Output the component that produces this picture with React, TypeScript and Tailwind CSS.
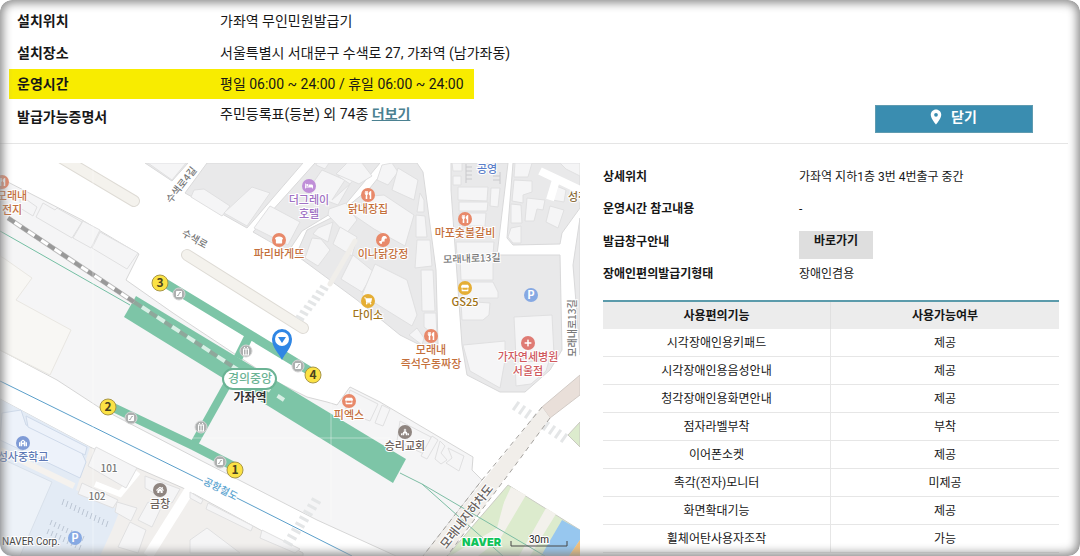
import type { ComponentType, ReactNode } from "react";
import {
  FaBed,
  FaBreadSlice,
  FaChurch,
  FaDrumstickBite,
  FaHome,
  FaPlus,
  FaSchool,
  FaShoppingCart,
  FaStore,
  FaUtensils,
} from "react-icons/fa";
import { MdEscalator, MdLocationOn } from "react-icons/md";

type IconType = ComponentType<{ x?: number; y?: number; size?: number; color?: string }>;

const features: [string, string][] = [
  ["시각장애인용키패드", "제공"],
  ["시각장애인용음성안내", "제공"],
  ["청각장애인용화면안내", "제공"],
  ["점자라벨부착", "부착"],
  ["이어폰소켓", "제공"],
  ["촉각(전자)모니터", "미제공"],
  ["화면확대기능", "제공"],
  ["휠체어탄사용자조작", "가능"],
];

const ORANGE = "#c4703c";
const BROWN = "#8a6d3b";

const places: { x: number; y: number; icon: IconType; fill: string; color: string; lines: string[] }[] = [
  { x: 309, y: 186, icon: FaBed, fill: "#c08fd8", color: "#a071c4", lines: ["더그레이", "호텔"] },
  { x: 368, y: 195, icon: FaUtensils, fill: "#e8896a", color: ORANGE, lines: ["닭내장집"] },
  { x: 279, y: 240, icon: FaBreadSlice, fill: "#e8896a", color: ORANGE, lines: ["파리바게뜨"] },
  { x: 383, y: 240, icon: FaDrumstickBite, fill: "#e8896a", color: ORANGE, lines: ["이나닭강정"] },
  { x: 465, y: 219, icon: FaUtensils, fill: "#e8896a", color: ORANGE, lines: ["마포숯불갈비"] },
  { x: 368, y: 301, icon: FaShoppingCart, fill: "#e5ae35", color: "#a07215", lines: ["다이소"] },
  { x: 465, y: 288, icon: FaStore, fill: "#e5ae35", color: "#a07215", lines: ["GS25"] },
  { x: 431, y: 336, icon: FaUtensils, fill: "#e8896a", color: ORANGE, lines: ["모래내", "즉석우동짜장"] },
  { x: 528, y: 343, icon: FaPlus, fill: "#df7b74", color: "#cf5a5e", lines: ["가자연세병원", "서울점"] },
  { x: 349, y: 401, icon: FaStore, fill: "#e8896a", color: ORANGE, lines: ["피엑스"] },
  { x: 405, y: 432, icon: FaChurch, fill: "#8f8580", color: "#6d625c", lines: ["승리교회"] },
  { x: 160, y: 490, icon: FaHome, fill: "#8f8580", color: "#6d625c", lines: ["금창"] },
  { x: 23, y: 443, icon: FaSchool, fill: "#7f9bd6", color: "#5d78b5", lines: ["성사중학교"] },
  { x: 2, y: 182, icon: FaUtensils, fill: "#e8896a", color: ORANGE, lines: ["모래내", "전지"] },
];

const exits = [
  { n: 1, x: 235, y: 470 },
  { n: 2, x: 108, y: 407 },
  { n: 3, x: 160, y: 283 },
  { n: 4, x: 313, y: 375 },
];

function Lift({ x = 0, y = 0, color }: { x?: number; y?: number; color?: string }) {
  return (
    <g transform={`translate(${x} ${y})`} fill="none" stroke={color}>
      <rect x="1.5" y="2" width="5" height="6" />
      <path d="M4 2v6M2 .5h1M5 .5h1" />
    </g>
  );
}

const facilities: { x: number; y: number; icon: IconType }[] = [
  { x: 179, y: 294, icon: MdEscalator },
  { x: 246, y: 351, icon: Lift },
  { x: 298, y: 366, icon: MdEscalator },
  { x: 131, y: 418, icon: MdEscalator },
  { x: 201, y: 427, icon: Lift },
  { x: 220, y: 462, icon: MdEscalator },
];

const buildings = [
  "43,203 55,210 57,208 82,222 72,238 36,217",
  "83,221 100,230 91,248 73,238",
  "100,232 138,253 127,269 92,248",
  "20,195 37,207 33,216 20,208",
  "194,190 204,189 230,206 222,216 191,197",
  "225,212 252,187 270,193 247,226 224,213",
  "148,163 186,163 172,180",
  "270,206 300,222 288,245 254,228",
  "308,190 322,170 345,180 332,200 350,184 338,205 314,196",
  "348,163 360,172 350,184 338,176",
  "347,163 362,163 372,176 359,184 336,174",
  "317,163 329,163 325,169 316,165",
  "329,209 346,203 357,220 346,234 328,215",
  "318,228 333,222 328,242 313,234",
  "312,238 321,239 330,250 318,266 305,258",
  "340,227 357,237 352,256 333,244",
  "353,255 374,272 362,292 341,279",
  "375,264 407,280 417,315 412,326 362,295",
  "372,196 384,195 414,215 405,246 374,229 352,214",
  "382,165 392,163 398,172 388,185 377,180",
  "398,168 418,180 414,200 392,190",
  "420,193 424,200 424,212 417,212",
  "416,215 425,216 427,237 416,237",
  "417,240 430,240 432,266 415,268",
  "421,270 433,270 435,311 422,311",
  "424,313 436,313 437,337 424,327",
  "409,335 417,328 424,338 422,345",
  "452,163 462,163 462,171 453,171",
  "453,176 461,176 461,185 453,185",
  "458,187 488,187 487,201 458,200",
  "459,202 488,202 487,211 459,211",
  "491,188 500,188 498,207 490,206",
  "459,213 486,213 485,226 460,226",
  "456,242 494,242 493,255 457,255",
  "460,258 493,258 493,280 461,280",
  "462,282 493,282 498,292 498,298 462,298",
  "461,301 490,303 489,315 483,320 462,320",
  "463,345 505,341 505,360 500,388 470,371",
  "514,317 552,315 554,355 516,358",
  "515,362 549,361 546,371 531,384 516,386",
  "515,163 532,163 528,177 514,177",
  "514,180 532,181 532,192 523,195 523,203 512,201",
  "511,204 521,205 522,223 511,223",
  "511,228 521,226 521,243 513,243 508,237",
  "527,198 545,200 543,210 537,209 534,221 525,221",
  "550,206 564,210 558,228 546,222",
  "554,185 566,190 564,202 552,200",
  "560,163 580,163 580,176 566,169",
  "350,390 378,404 370,421 345,412",
  "382,405 390,409 383,426 375,423",
  "400,421 431,437 426,455 397,441",
  "432,436 438,440 427,459 421,456",
  "440,441 445,446 441,453 447,460 441,464 435,459",
  "448,448 464,456 459,471 446,463 452,458",
  "96,447 137,468 126,488 88,466",
  "82,483 118,500 113,508 78,494",
  "145,476 180,489 172,503 145,488",
  "148,502 138,520 152,527 160,510",
  "117,502 137,508 131,521 115,512",
  "130,522 146,530 138,553 118,547",
  "208,503 253,526 251,531 206,509",
  "190,492 203,500 201,504 190,498",
  "262,530 300,549 295,553 260,538",
  "190,540 207,528 240,553 190,553",
];

const blocks = [
  "145,163 172,181 188,163",
  "207,163 185,193 247,228 303,163",
  "315,163 253,232 288,252 302,231 345,205 380,163",
  "390,163 370,188 337,215 307,230 296,255 357,300 400,335 430,350 438,345 436,270 423,172 417,163",
  "451,163 451,190 462,345 467,375 500,392 525,392 550,370 562,350 560,255 497,255 508,163",
  "513,163 507,238 513,245 560,244 562,233 580,208 580,163",
  "580,218 573,265 575,290 580,355",
];

function slide(count: number, x: number, y: number, dx: number, dy: number, w: number, h: number, angle: number) {
  return Array.from({ length: count }, (_, i) => (
    <rect
      key={i}
      x={-w / 2}
      y={-h / 2}
      width={w}
      height={h}
      transform={`translate(${x + dx * i} ${y + dy * i}) rotate(${angle})`}
    />
  ));
}

function StationMap() {
  return (
    <svg
      viewBox="0 163 580 393"
      preserveAspectRatio="xMidYMid slice"
      role="img"
      aria-label="가좌역 지도"
      className="block h-full w-full bg-white font-['Noto_Sans_CJK_KR','Noto_Sans',sans-serif]"
    >
      {/* station grounds */}
      <polygon
        points="0,178 82,220 139,254 126,280 173,313 277,382 307,397 327,402 337,405 350,387 380,402 473,457 472,470 482,480 423,556 396,556 317,520 200,460 100,408 57,380 0,350"
        fill="#f5f5f6"
        stroke="#d6d6d6"
      />
      <polygon points="0,256 5,259 32,278 16,300 71,330 50,375 0,350" fill="#f8f7f4" stroke="#e9e7e2" />

      {/* school and lower blocks */}
      <polygon points="0,399 90,447 137,468 183,488 303,553 303,556 0,556" fill="#f1efed" stroke="#d6d6d6" />
      <polygon points="0,399 90,447 76,490 120,510 112,530 100,556 0,556" fill="#e3ebf5" />
      <polygon points="2,413 21,410 26,425 80,449 86,462 80,478 0,440" fill="#edf2fa" stroke="#cfdaea" />
      <polygon points="0,458 52,482 20,556 0,556" fill="#edf2f8" stroke="#d8e0ea" />
      <polygon points="26,416 87,447 85,455 28,427" fill="#edf2fa" stroke="#cfdaea" />
      <polyline points="0,450 74,486" stroke="#f5f2ee" strokeWidth="6" fill="none" />
      <polyline points="95,484 120,494 138,472" stroke="#fff" strokeWidth="6" fill="none" />
      <polyline points="190,489 148,556" stroke="#fff" strokeWidth="10" fill="none" />
      <g stroke="#bcc6d4" strokeWidth="1">
        {Array.from({ length: 12 }, (_, i) => (
          <path key={i} d={`M${64 + i * 4} ${499 + i * 2}l-2 6`} />
        ))}
        {Array.from({ length: 9 }, (_, i) => (
          <path key={i} d={`M${52 + i * 4} ${520 + i * 2}l-2 5m-1 4l-2 5`} />
        ))}
      </g>

      {/* city blocks */}
      <g fill="#e9e9ea" stroke="#d9d9da">
        {blocks.map((p) => (
          <polygon key={p} points={p} />
        ))}
      </g>
      <g fill="#f5f5f6" stroke="#e0e0e1">
        {buildings.map((p) => (
          <polygon key={p} points={p} />
        ))}
      </g>
      <polyline points="355,241 330,284" stroke="#f0eeea" strokeWidth="5" strokeLinecap="round" fill="none" />
      <g stroke="#fff" strokeWidth="8" fill="none">
        <polyline points="540,171 582,191" />
        <polyline points="556,180 550,200" />
      </g>
      <path d="M466 164v19M466 167h6M466 171h6M466 175h6M466 179h6M500 172v12M493 176h7M493 180h7" stroke="#c9c9cc" fill="none" />

      {/* road medians */}
      <g strokeLinecap="round" fill="none">
        <path d="M60 157L134 201M187 255L303 328" stroke="#dedbd5" strokeWidth="12" />
        <path d="M60 157L134 201M187 255L303 328" stroke="#f4f2ed" strokeWidth="10" />
      </g>
      <g fill="#e4e6e7">
        {slide(7, 300, 318, 4, -5, 9, 3, 28)}
        {slide(9, 516, 406, 6, 4, 3, 10, 35)}
        {slide(8, 288, 543, 4, -6, 10, 3, 28)}
      </g>

      {/* underpass and park */}
      <polygon points="508,485 580,530 580,556 447,556" fill="#dcebcd" stroke="#cbcbc4" />
      <polygon points="511,487 526,495 500,539 478,556 448,556 491,530" fill="#f3f1ec" />
      <polygon points="508,487 497,528 450,556" fill="#dcebcd" />
      <polygon points="546,508 556,514 530,556 519,556" fill="#f3f1ec" />
      <polygon points="562,520 580,530 580,540 569,556 541,556" fill="#97c7ef" />
      <polygon points="580,540 580,556 569,556" fill="#f3c07b" />
      <polygon points="580,422 568,435 580,447" fill="#dcebcd" stroke="#c9c9c0" />
      <polygon points="542,407 580,375 580,395 550,418" fill="#e9dfd9" stroke="#d2cbc6" />
      <polygon points="542,407 550,418 447,556 423,556" fill="#f1eeea" />
      <path d="M542 407L482 480L423 556M550 418L508 475L447 556" stroke="#a3a09c" strokeDasharray="5 4" fill="none" />

      {/* railways */}
      <path d="M0 231L130 305" stroke="#74bfa3" strokeWidth="1" />
      <path d="M0 381L203 481M235 497L352 556" stroke="#5b9fca" strokeWidth="1" fill="none" />
      <g stroke="#7dc5a7" fill="none">
        <path d="M160 280L313 373M248 338L238 358" strokeWidth="9" />
        <path d="M108 405L194 446L235 467" strokeWidth="9" />
        <path d="M227 385L194 444" strokeWidth="8" />
      </g>
      <polygon points="136,296 406,459 393,483 124,317" fill="#7dc5a7" />
      <path d="M8 218L134 302" stroke="#bbb" strokeWidth="5" />
      <path d="M8 218L134 302" stroke="#fff" strokeWidth="3" />
      <path d="M8 218L134 302" stroke="#999" strokeWidth="4" strokeDasharray="8 8" />
      <path d="M134 302L232 366" stroke="#8fa79b" strokeWidth="4" strokeDasharray="9 9" />
      <path d="M142 307L284 400" stroke="#d9efe5" strokeWidth="4" strokeDasharray="9 9" />
      <path d="M400 473L422 484L545 556M422 484L503 556" stroke="#7dbda4" strokeWidth="1" fill="none" />
      <path d="M190 438H390M331 400V520M93 163V556" stroke="#fff" strokeOpacity="0.4" />

      {/* parking */}
      {[
        [531, 295],
        [75, 538],
      ].map(([x, y]) => (
        <g key={x}>
          <circle cx={x} cy={y} r="7" fill="#86a9e3" />
          <text x={x} y={y + 4} textAnchor="middle" fontSize="11" fontWeight="700" fill="#fff">
            P
          </text>
        </g>
      ))}

      {/* street names */}
      <g fontSize="10" fill="#777" fontWeight="500" stroke="#fff" strokeWidth="2" paintOrder="stroke" textAnchor="middle">
        <text transform="translate(184 187) rotate(-52)">수색로4길</text>
        <text transform="translate(193 242) rotate(29)">수색로</text>
        <text transform="translate(472 262) rotate(-2)">모래내로13길</text>
        <text transform="translate(576 328) rotate(-90)">모래내로13길</text>
        <text transform="translate(219 492) rotate(27)" fill="#5aa3cf">공항철도</text>
        <text transform="translate(470 519) rotate(-52)" fontSize="12" fill="#66605c">모래내지하차도</text>
        <text x="109" y="472">101</text>
        <text x="97" y="500">102</text>
        <text x="487" y="173" fontSize="11" fill="#5b7fc9">공영</text>
        <text x="578" y="201" fontSize="11" fill={BROWN}>성경</text>
      </g>

      {/* places */}
      {places.map(({ x, y, icon: Icon, fill, color, lines }) => (
        <g key={lines.join("") + x}>
          <circle cx={x} cy={y} r="7" fill={fill} />
          <Icon x={x - 4} y={y - 4} size={8} color="#fff" />
          {lines.map((line, i) => (
            <text
              key={line}
              x={x + (x === 2 ? 10 : 0)}
              y={y + 18 + i * 14}
              textAnchor="middle"
              fontSize="11"
              fontWeight="500"
              fill={color}
              stroke="#fff"
              strokeWidth="2"
              paintOrder="stroke"
            >
              {line}
            </text>
          ))}
        </g>
      ))}

      {facilities.map(({ x, y, icon: Icon }) => (
        <g key={x}>
          <circle cx={x} cy={y} r="6" fill="#aeb0b0" stroke="#d6d6d6" />
          <Icon x={x - 4} y={y - 4} size={8} color="#fff" />
        </g>
      ))}
      {exits.map(({ n, x, y }) => (
        <g key={n}>
          <circle cx={x} cy={y} r="8" fill="#fbe244" stroke="#a89648" strokeWidth="1" />
          <text x={x} y={y + 4} textAnchor="middle" fontSize="12" fontWeight="700" fill="#4a4320">
            {n}
          </text>
        </g>
      ))}

      <path d="M282 360C279 353 272 348 272 339a10 10 0 1 1 20 0C292 348 285 353 282 360Z" fill="#2f86e4" />
      <circle cx="282" cy="339" r="7" fill="#fff" />
      <path d="M278 337h8l-4 6Z" fill="#2f86e4" />

      {/* station name */}
      <rect x="223" y="369" width="53" height="20" rx="10" fill="#fff" stroke="#6bb394" strokeWidth="2" />
      <text x="250" y="383" textAnchor="middle" fontSize="12" fontWeight="500" fill="#6bb394">
        경의중앙
      </text>
      <text x="250" y="402" textAnchor="middle" fontSize="12" fontWeight="700" fill="#333" stroke="#fff" strokeWidth="2" paintOrder="stroke">
        가좌역
      </text>

      {/* attribution and scale */}
      <g stroke="#fff" strokeWidth="2" paintOrder="stroke">
        <text x="2" y="545" className="font-[Roboto]" fontSize="10" fill="#444">
          NAVER Corp.
        </text>
        <text x="462" y="546" className="font-[Inter]" fontSize="11" fontWeight="900" fill="#0fc35a">
          NAVER
        </text>
        <text x="539" y="543" textAnchor="middle" className="font-[Roboto]" fontSize="10" fill="#222">
          30m
        </text>
      </g>
      <path d="M511 541V546H567V541" stroke="#444" fill="none" />
    </svg>
  );
}

function Row({ label, children }: { label: string; children: ReactNode }) {
  return (
    <div className="flex h-8 items-center pl-2">
      <dt className="w-[203px] shrink-0 font-bold">{label}</dt>
      <dd>{children}</dd>
    </div>
  );
}

export default function App() {
  return (
    <main className="relative flex min-h-screen flex-col overflow-hidden rounded-xl bg-white font-[Roboto,'Noto_Sans_CJK_KR',sans-serif] text-sm leading-5 text-neutral-900">
      <header className="mr-3 flex items-end justify-between border-b border-neutral-200 pt-[5px] pb-2.5 pl-[9px]">
        <dl>
          <Row label="설치위치">가좌역 무인민원발급기</Row>
          <Row label="설치장소">서울특별시 서대문구 수색로 27, 가좌역 (남가좌동)</Row>
          <div className="mb-0.5 flex h-[30px] w-fit items-center bg-[#f8ec00] pr-2.5 pl-2">
            <dt className="w-[203px] shrink-0 font-bold">운영시간</dt>
            <dd>평일 06:00 ~ 24:00 / 휴일 06:00 ~ 24:00</dd>
          </div>
          <Row label="발급가능증명서">
            <span className="block pb-1.5">
              주민등록표(등본) 외 74종{" "}
              <a href="#more" className="font-bold text-[#4b8191] underline">
                더보기
              </a>
            </span>
          </Row>
        </dl>
        <button
          type="button"
          className="mr-[35px] flex h-7 w-[158px] items-center justify-center gap-1.5 border border-[#5f9bb0] bg-[#3a8db0] pr-1 pb-1 font-bold text-white"
        >
          <MdLocationOn className="size-[18px]" />
          닫기
        </button>
      </header>

      <div className="mt-[19px] grid flex-1 grid-cols-[580fr_500fr]">
        <StationMap />

        <section className="-mt-0.5 pr-[21px] pl-[23px] text-xs">
          <dl className="grid grid-cols-[196px_1fr]">
            <dt className="flex h-8 items-center font-bold">상세위치</dt>
            <dd className="flex h-8 items-center">가좌역 지하1층 3번 4번출구 중간</dd>
            <dt className="flex h-8 items-center font-bold">운영시간 참고내용</dt>
            <dd className="flex h-8 items-center">-</dd>
            <dt className="flex h-[34px] items-center font-bold">발급창구안내</dt>
            <dd className="flex h-[34px] items-end">
              <button type="button" className="flex h-7 w-[74px] items-center justify-center bg-[#dedede] pb-2 font-bold">
                바로가기
              </button>
            </dd>
            <dt className="flex h-[30px] items-center font-bold">장애인편의발급기형태</dt>
            <dd className="flex h-[30px] items-center">장애인겸용</dd>
          </dl>

          <table className="mt-[11px] w-full table-fixed border-separate border-spacing-0 border-t-2 border-[#5b9bab] text-center leading-4">
            <thead className="bg-[#ececec]">
              <tr className="h-[27px]">
                <th scope="col" className="border-r border-[#e0e0e0]">
                  사용편의기능
                </th>
                <th scope="col">사용가능여부</th>
              </tr>
            </thead>
            <tbody>
              {features.map(([name, value]) => (
                <tr key={name} className="h-7">
                  <td className="border-r border-b border-[#e6e6e6]">{name}</td>
                  <td className="border-b border-[#e6e6e6]">{value}</td>
                </tr>
              ))}
            </tbody>
          </table>
        </section>
      </div>

      <div className="pointer-events-none absolute inset-0 rounded-xl shadow-[inset_0_0_10px_3px_#8c8c8c]" />
    </main>
  );
}
